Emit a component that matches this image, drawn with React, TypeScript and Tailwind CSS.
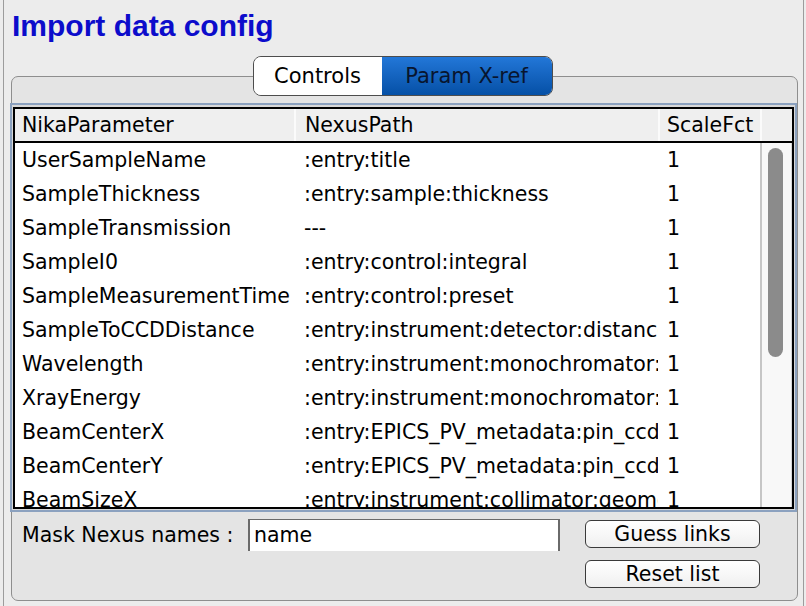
import React from "react";

const rows: [string, string, string][] = [
  ["UserSampleName", ":entry:title", "1"],
  ["SampleThickness", ":entry:sample:thickness", "1"],
  ["SampleTransmission", "---", "1"],
  ["SampleI0", ":entry:control:integral", "1"],
  ["SampleMeasurementTime", ":entry:control:preset", "1"],
  ["SampleToCCDDistance", ":entry:instrument:detector:distance", "1"],
  ["Wavelength", ":entry:instrument:monochromator:wavelength", "1"],
  ["XrayEnergy", ":entry:instrument:monochromator:energy", "1"],
  ["BeamCenterX", ":entry:EPICS_PV_metadata:pin_ccd_center_x", "1"],
  ["BeamCenterY", ":entry:EPICS_PV_metadata:pin_ccd_center_y", "1"],
  ["BeamSizeX", ":entry:instrument:collimator:geometry:shape:xsize", "1"],
];

export default function App() {
  return (
    <div className="w-[806px] h-[606px] bg-[#ececec] flex overflow-hidden font-['DejaVu_Sans',sans-serif] text-black">
      <div className="w-[3px] shrink-0" />
      <div className="w-[801px] shrink-0 border-l border-r border-[#9c9c9c] flex flex-col pt-[9px]">
        <div className="pl-[8px] h-[34px] leading-[34px] text-[30px] font-bold text-[#0c0ccb] font-['Liberation_Sans',Arial,sans-serif] whitespace-nowrap">
          Import data config
        </div>
        <div className="ml-[7px] w-[787px] mt-[13px] h-[40px] flex justify-center pr-[4px] relative z-10">
          <div className="flex h-[40px] rounded-[8px] border border-[#4d4d4d] overflow-hidden text-[21px] leading-[38px]">
            <div className="w-[128px] bg-white text-center">Controls</div>
            <div className="w-[170px] bg-gradient-to-b from-[#2277d8] to-[#0550a6] text-center text-[#08152e]">Param X-ref</div>
          </div>
        </div>
        <div className="ml-[7px] w-[787px] h-[525px] -mt-[20px] rounded-[7px] border border-[#8e8e8e] bg-[#e4e4e4] flex flex-col">
          <div className="-ml-[2px] mt-[26px] w-[787px] h-[409px] border-2 border-[#8ba1bf] pt-[2px] px-[1px] pb-[1px] bg-[#d8d8d8]">
            <div className="w-full h-full border-2 border-black bg-white flex flex-col overflow-hidden text-[20.5px]">
              <div className="h-[34px] shrink-0 flex bg-[#efefef] border-b-2 border-black leading-[32px]">
                <div className="w-[279px] pl-[7px] whitespace-nowrap overflow-hidden">NikaParameter</div>
                <div className="w-[364px] pl-[9px] border-l-2 border-[#fbfbfb] whitespace-nowrap overflow-hidden">NexusPath</div>
                <div className="w-[102px] pl-[7px] border-l-2 border-[#fbfbfb] whitespace-nowrap overflow-hidden">ScaleFct</div>
                <div className="w-[32px] border-l-2 border-[#fbfbfb]" />
              </div>
              <div className="flex-1 flex overflow-hidden">
                <div className="w-[745px] flex flex-col">
                  {rows.map((r) => (
                    <div key={r[0]} className="h-[34px] shrink-0 flex leading-[34px] whitespace-nowrap">
                      <div className="w-[279px] pl-[7px] overflow-hidden">{r[0]}</div>
                      <div className="w-[364px] pl-[10px] pr-[2px] overflow-hidden">{r[1]}</div>
                      <div className="w-[102px] pl-[9px] overflow-hidden">{r[2]}</div>
                    </div>
                  ))}
                </div>
                <div className="w-[32px] border-l-2 border-[#c6c6c6] bg-[#f8f8f8] border-r border-r-[#d6d6d6]">
                  <div className="ml-[6px] mt-[5px] w-[15px] h-[209px] rounded-full bg-[#8b8b8b]" />
                </div>
              </div>
            </div>
          </div>
          <div className="flex items-start pt-[7px] text-[20.5px]">
            <div className="flex items-center pl-[10px]">
              <span className="w-[226px] whitespace-nowrap">Mask Nexus names :</span>
              <div className="w-[312px] h-[32px] bg-white border-l-2 border-r-2 border-t border-[#6a6a6a] pl-[4px] leading-[30px]">name</div>
            </div>
            <div className="ml-[25px] mt-[1px] flex flex-col gap-[12px]">
              <div className="w-[175px] h-[28px] rounded-[6px] border border-[#3a3a3a] bg-gradient-to-b from-white to-[#f0f0f0] text-center leading-[26px]">Guess links</div>
              <div className="w-[175px] h-[28px] rounded-[6px] border border-[#3a3a3a] bg-gradient-to-b from-white to-[#f0f0f0] text-center leading-[26px]">Reset list</div>
            </div>
          </div>
        </div>
      </div>
    </div>
  );
}
